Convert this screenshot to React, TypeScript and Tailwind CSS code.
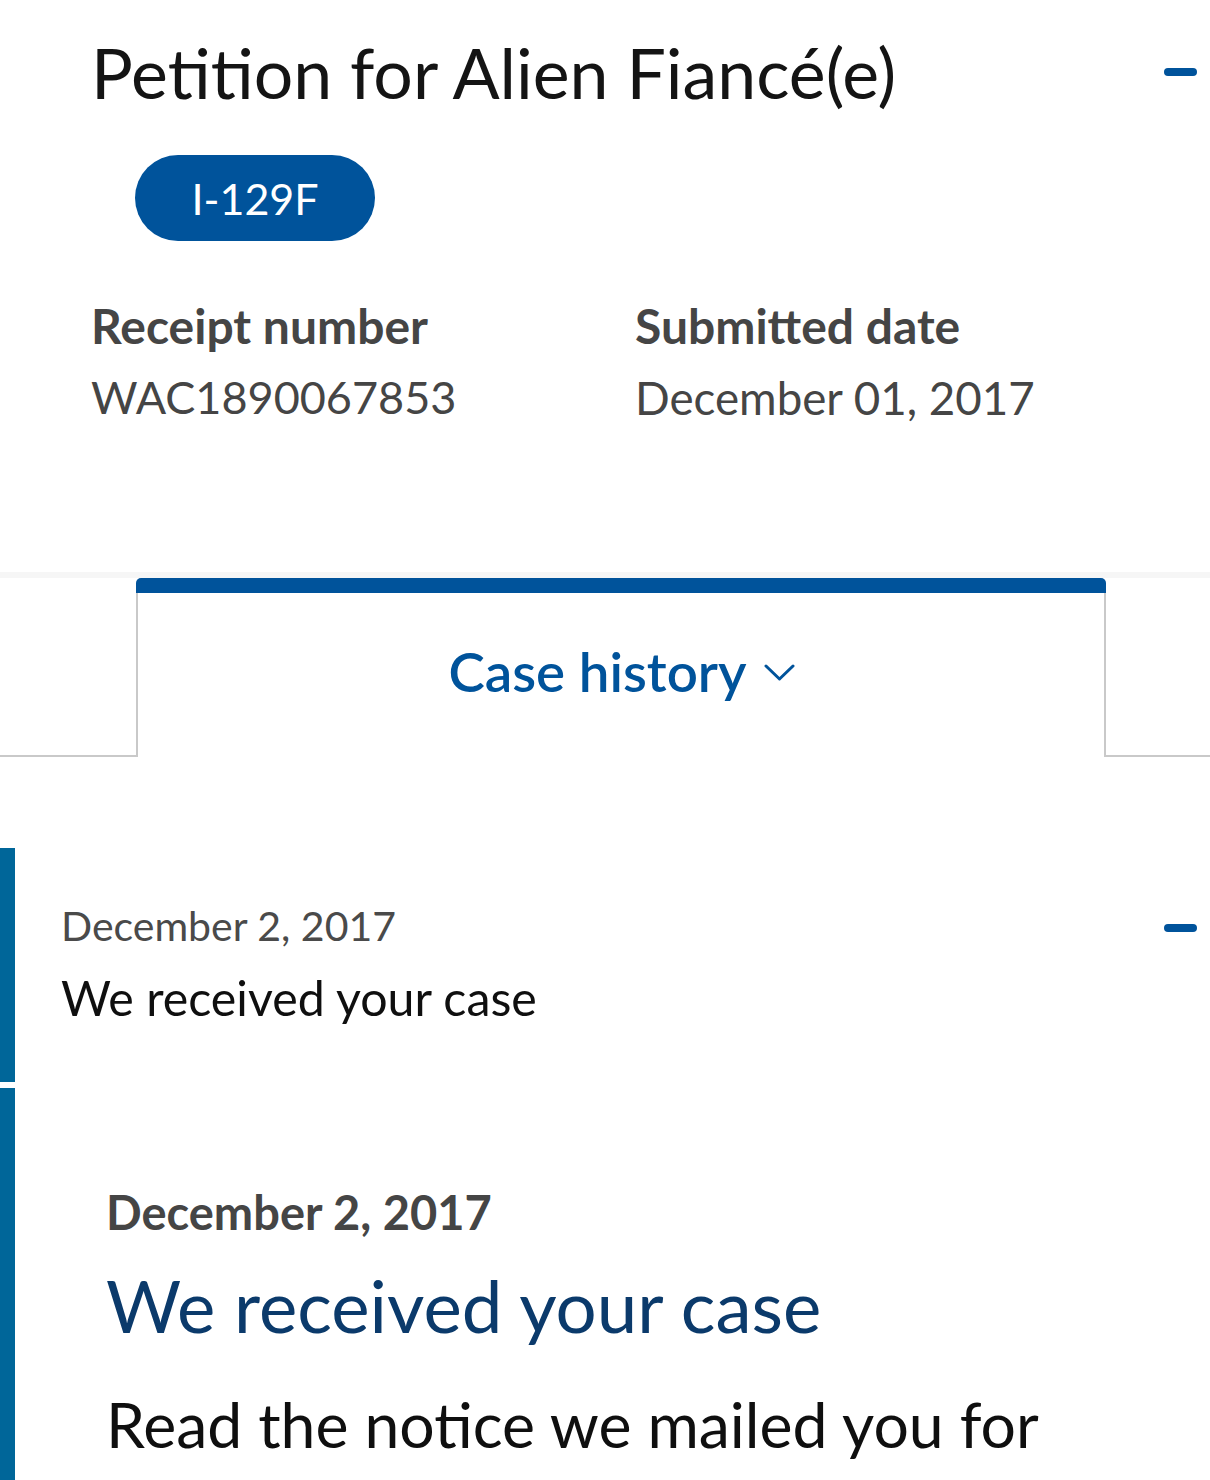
import React from "react";

function Minus() {
  return <div className="h-[8px] w-[33px] rounded-full bg-[#00539b]" />;
}

export default function App() {
  return (
    <div className="h-[1480px] w-[1210px] overflow-hidden bg-white font-['Lato',sans-serif]">
      {/* Header */}
      <section className="h-[572px] pt-[38px]">
        <div className="flex items-start justify-between pl-[91px] pr-[13px]">
          <h1 className="text-[69.8px] font-normal leading-none text-[#141414]">
            Petition for Alien Fiancé(e)
          </h1>
          <div className="pt-[30px]">
            <Minus />
          </div>
        </div>
        <div className="ml-[135px] mt-[47px] flex h-[86px] w-[240px] items-center justify-center rounded-full bg-[#00539b]">
          <span className="pt-[2px] text-[43px] leading-none text-white">I-129F</span>
        </div>
        <div className="mt-[61px] grid grid-cols-[544px_1fr] pl-[91px]">
          <div>
            <div className="text-[48px] font-bold leading-none text-[#454545]">Receipt number</div>
            <div className="mt-[25px] text-[45px] leading-none text-[#454545]">WAC1890067853</div>
          </div>
          <div>
            <div className="text-[48px] font-bold leading-none text-[#454545]">Submitted date</div>
            <div className="mt-[25px] text-[45.7px] leading-none text-[#454545]">December 01, 2017</div>
          </div>
        </div>
      </section>

      {/* Tab strip */}
      <div className="h-[6px] bg-[#f6f6f6]" />
      <div className="flex h-[179px]">
        <div className="w-[136px] border-b-2 border-[#c9c9c9]" />
        <div className="flex w-[970px] flex-col">
          <div className="h-[15px] rounded-t-[5px] bg-[#00539b]" />
          <div className="flex flex-1 justify-center border-x-2 border-[#c9c9c9] pt-[51px]">
            <div className="flex items-start gap-[17px] pl-[1px]">
              <span className="text-[54.7px] font-semibold leading-none text-[#00539b]">Case history</span>
              <svg
                width="31"
                height="20"
                viewBox="0 0 31 20"
                fill="none"
                className="mt-[19px]"
              >
                <polyline
                  points="2,3 15.5,16 29,3"
                  stroke="#00539b"
                  strokeWidth="3"
                  strokeLinecap="round"
                  strokeLinejoin="round"
                />
              </svg>
            </div>
          </div>
        </div>
        <div className="flex-1 border-b-2 border-[#c9c9c9]" />
      </div>

      {/* Timeline */}
      <div className="pt-[91px]">
        <div className="flex h-[234px]">
          <div className="w-[15px] bg-[#006699]" />
          <div className="flex flex-1 items-start justify-between pl-[46px] pr-[13px] pt-[57px]">
            <div>
              <div className="text-[41px] leading-none text-[#4a4a4a]">December 2, 2017</div>
              <div className="mt-[27px] text-[48.3px] leading-none text-[#0f0f0f]">We received your case</div>
            </div>
            <div className="pt-[19px]">
              <Minus />
            </div>
          </div>
        </div>

        <div className="mt-[6px] flex min-h-[500px]">
          <div className="w-[15px] bg-[#006699]" />
          <div className="flex-1 pl-[91px] pr-[45px] pt-[101px]">
            <div className="text-[47px] font-bold leading-none text-[#454545]">December 2, 2017</div>
            <div className="mt-[33px] text-[72.6px] leading-none text-[#0b3a6b]">We received your case</div>
            <p className="mt-[40px] text-[62.5px] leading-[1.35] text-[#0f0f0f]">
              Read the notice we mailed you for
            </p>
          </div>
        </div>
      </div>
    </div>
  );
}
